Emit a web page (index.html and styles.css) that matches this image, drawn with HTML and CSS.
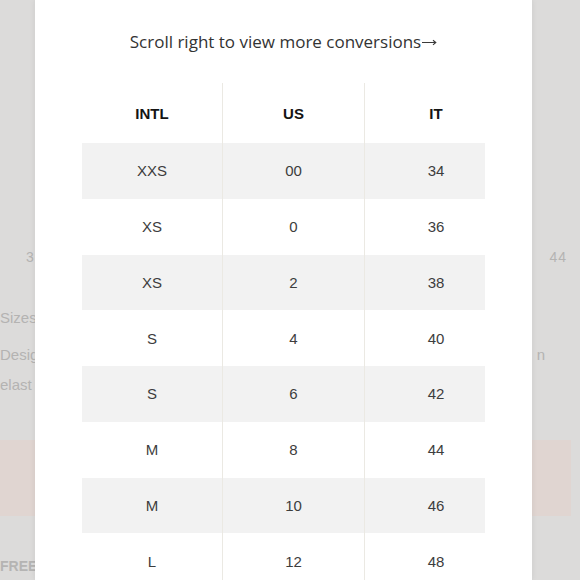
FILE: index.html
```html
<!DOCTYPE html>
<html lang="en">
<head>
<meta charset="utf-8">
<title>Size conversions</title>
<link rel="stylesheet" href="styles.css">
</head>
<body>
<div class="backdrop">
  <div class="chart"><span>3</span><span>44</span></div>
  <div class="line">Sizes</div>
  <div class="line split"><span>Design</span><span>n</span></div>
  <div class="line">elast</div>
  <div class="band"></div>
  <div class="free">FREE</div>
</div>

<div class="modal">
  <p class="hint">Scroll right to view more conversions<svg class="arrow" width="15" height="8" viewBox="0 0 15 8" aria-hidden="true"><path d="M0 4.5H13.5M11 2.2L13.8 4.5L11 6.8" fill="none" stroke="#3a3a3a" stroke-width="1.1"/></svg></p>
  <div class="scroller">
    <div class="sheet">
      <div class="row head"><div class="cell">INTL</div><div class="cell">US</div><div class="cell">IT</div></div>
      <div class="row shade"><div class="cell">XXS</div><div class="cell">00</div><div class="cell">34</div></div>
      <div class="row"><div class="cell">XS</div><div class="cell">0</div><div class="cell">36</div></div>
      <div class="row shade"><div class="cell">XS</div><div class="cell">2</div><div class="cell">38</div></div>
      <div class="row"><div class="cell">S</div><div class="cell">4</div><div class="cell">40</div></div>
      <div class="row shade"><div class="cell">S</div><div class="cell">6</div><div class="cell">42</div></div>
      <div class="row"><div class="cell">M</div><div class="cell">8</div><div class="cell">44</div></div>
      <div class="row shade"><div class="cell">M</div><div class="cell">10</div><div class="cell">46</div></div>
      <div class="row"><div class="cell">L</div><div class="cell">12</div><div class="cell">48</div></div>
    </div>
  </div>
</div>
</body>
</html>
```

FILE: styles.css
```css
* { box-sizing: border-box; }

html, body {
  margin: 0;
  padding: 0;
}

body {
  width: 580px;
  height: 580px;
  overflow: hidden;
  position: relative;
  background: #dcdbda;
  font-family: "Liberation Sans", Arial, sans-serif;
}

/* faded page behind the overlay */
.backdrop {
  height: 580px;
  padding-top: 249px;
  color: #b4b3b2;
}

.chart {
  display: flex;
  justify-content: space-between;
  height: 16px;
  font-size: 14px;
  line-height: 16px;
  padding-left: 26px;
  padding-right: 13px;
  letter-spacing: 1px;
}

.line {
  margin-top: 12px;
  font-size: 15px;
  line-height: 18px;
  height: 18px;
}

.chart + .line { margin-top: 44px; }
.chart + .line + .line { margin-top: 19px; }

.split {
  display: flex;
  justify-content: space-between;
  padding-right: 35px;
}

.band {
  margin-top: 46px;
  height: 76px;
  margin-right: 9px;
  background: #e0d5d1;
}

.free {
  margin-top: 40px;
  font-size: 14px;
  line-height: 20px;
  font-weight: bold;
  color: #b5b4b3;
  white-space: nowrap;
}

/* modal overlay */
.modal {
  position: absolute;
  left: 35px;
  top: 0;
  width: 497px;
  height: 580px;
  background: #ffffff;
  box-shadow: 0 0 6px rgba(0, 0, 0, 0.08);
  padding: 32px 47px 0;
}

.hint {
  margin: 0;
  text-align: center;
  font-family: "Open Sans", "Liberation Sans", sans-serif;
  font-size: 17px;
  line-height: 20px;
  color: #333333;
}

.arrow {
  margin-left: 1px;
  vertical-align: 2px;
}

.scroller {
  margin-top: 31px;
  width: 403px;
  overflow: hidden;
}

.sheet {
  width: 425px;
}

.row {
  display: flex;
  height: 55.75px;
}

.row.head {
  height: 60px;
}

.shade {
  background: #f2f2f2;
}

.cell {
  flex: none;
  width: 142px;
  display: flex;
  align-items: center;
  justify-content: center;
  font-size: 15px;
  color: #3d3d3d;
  border-right: 1px solid #ebe9e3;
}

.cell:first-child { width: 141px; }
.cell:last-child { border-right: none; }

.head .cell {
  font-weight: bold;
  font-size: 15px;
  color: #141414;
}
```
